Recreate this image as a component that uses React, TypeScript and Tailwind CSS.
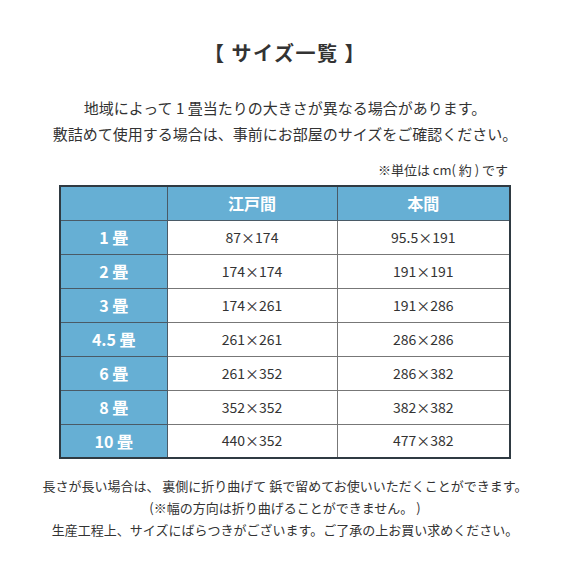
const rows = [
  ["1 畳", "87×174", "95.5×191"],
  ["2 畳", "174×174", "191×191"],
  ["3 畳", "174×261", "191×286"],
  ["4.5 畳", "261×261", "286×286"],
  ["6 畳", "261×352", "286×382"],
  ["8 畳", "352×352", "382×382"],
  ["10 畳", "440×352", "477×382"],
];

export default function App() {
  return (
    <div
      className="w-[570px] h-[570px] bg-white text-[#333] flex flex-col items-center"
      style={{ fontFamily: '"Noto Sans CJK JP", "Noto Sans", sans-serif' }}
    >
      <h1 className="mt-[38px] text-[20px] font-bold leading-[30px] tracking-[1.5px]">【 サイズ一覧 】</h1>

      <div className="mt-[27px] text-[15px] leading-[26px] text-center">
        <p>地域によって 1 畳当たりの大きさが異なる場合があります。</p>
        <p>敷詰めて使用する場合は、事前にお部屋のサイズをご確認ください。</p>
      </div>

      <div className="w-[450px] mt-[13px] text-right text-[13px] leading-[20px] pr-[2px]">
        ※単位は cm( 約 ) です
      </div>

      <table className="mt-[5px] w-[450px] border-collapse border-2 border-[#2f3a42] table-fixed">
        <colgroup>
          <col className="w-[107px]" />
          <col className="w-[170px]" />
          <col className="w-[173px]" />
        </colgroup>
        <thead>
          <tr className="h-[34px] bg-[#66afd4] text-white text-[16px] font-bold">
            <th className="border border-[#4a5a66]"></th>
            <th className="border border-[#4a5a66]">江戸間</th>
            <th className="border border-[#4a5a66]">本間</th>
          </tr>
        </thead>
        <tbody>
          {rows.map((r) => (
            <tr key={r[0]} className="h-[34px] text-[14px]">
              <td className="border border-[#4a5a66] bg-[#66afd4] text-white font-bold text-center text-[16px]">
                {r[0]}
              </td>
              <td className="border border-[#777] text-center">{r[1]}</td>
              <td className="border border-[#777] text-center">{r[2]}</td>
            </tr>
          ))}
        </tbody>
      </table>

      <div className="mt-[16px] text-[13px] leading-[22px] text-center">
        <p>長さが長い場合は、 裏側に折り曲げて 鋲で留めてお使いいただくことができます。</p>
        <p>(※幅の方向は折り曲げることができません。 )</p>
        <p>生産工程上、サイズにばらつきがございます。ご了承の上お買い求めください。</p>
      </div>
    </div>
  );
}
